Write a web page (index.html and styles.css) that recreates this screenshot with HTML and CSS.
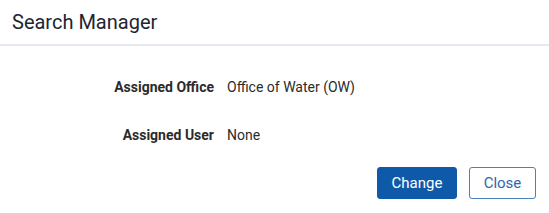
FILE: index.html
```html
<!doctype html>
<html lang="en">

<head>
	<meta charset="UTF-8">
	<title>Search Manager</title>
	<link rel="stylesheet" href="styles.css">
</head>

<body>
	<div class="modal">
		<header class="modal-header">
			<h2>Search Manager</h2>
		</header>

		<div class="modal-body">
			<dl class="details">
				<dt>Assigned Office</dt>
				<dd>Office of Water (OW)</dd>
				<dt>Assigned User</dt>
				<dd>None</dd>
			</dl>
		</div>

		<div class="modal-footer">
			<button class="btn btn-primary">Change</button>
			<button class="btn btn-outline">Close</button>
		</div>
	</div>
</body>

</html>
```

FILE: styles.css
```css
* {
	box-sizing: border-box;
	margin: 0;
	padding: 0;
}

body {
	background: #ffffff;
	color: #222222;
	font-family: Roboto, "Liberation Sans", sans-serif;
	font-size: 14px;
}

.modal {
	width: 549px;
	height: 213px;
	display: flex;
	flex-direction: column;
}

.modal-header {
	height: 46px;
	padding: 0 12px;
	border-bottom: 2px solid #e6eaf0;
	display: flex;
	align-items: center;
}

.modal-header h2 {
	font-size: 20px;
	font-weight: 400;
	color: #1d2533;
	margin-top: -1px;
}

.modal-body {
	padding: 33px 0 0 0;
}

.details {
	display: grid;
	grid-template-columns: 214px 1fr;
	column-gap: 13px;
	row-gap: 31px;
	line-height: 17px;
	font-size: 14px;
}

.details dt {
	text-align: right;
	font-weight: 700;
	color: #2b2b2b;
}

.details dd {
	color: #2b2b2b;
}

.modal-footer {
	display: flex;
	justify-content: flex-end;
	gap: 12px;
	padding: 0 13px 0 0;
	margin-top: 23px;
}

.btn {
	height: 32px;
	border-radius: 3px;
	font-family: Roboto, "Liberation Sans", sans-serif;
	font-size: 15px;
	cursor: pointer;
}

.btn-primary {
	width: 80px;
	background: #0f5aa8;
	border: 1px solid #0f5aa8;
	color: #ffffff;
}

.btn-outline {
	width: 67px;
	background: #ffffff;
	border: 1px solid #4b80bf;
	color: #2e67ad;
}
```
